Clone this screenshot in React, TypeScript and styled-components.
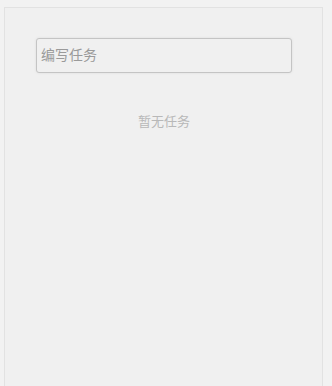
import React from "react";
import styled, { createGlobalStyle } from "styled-components";

const Global = createGlobalStyle`
  html, body { margin: 0; padding: 0; background: #f2f2f2; }
  body { font-family: "Noto Sans CJK SC", "Liberation Sans", sans-serif; overflow: hidden; }
`;

const Panel = styled.div`
  margin: 7px 0 0 4px;
  width: 319px;
  height: 379px;
  box-sizing: border-box;
  border: 1px solid #e2e2e2;
  border-bottom: none;
  background: #f0f0f0;
  display: flex;
  flex-direction: column;
  align-items: flex-start;
  padding: 30px 0 0 31px;
`;

const TaskInput = styled.input`
  width: 256px;
  height: 35px;
  box-sizing: border-box;
  border: 1px solid #c4c4c4;
  border-radius: 3px;
  background: #f0f0f0;
  box-shadow: 0 0 3px rgba(0, 0, 0, 0.08);
  padding: 0 0 3px 4px;
  font-family: "Noto Sans CJK SC", "Liberation Sans", sans-serif;
  font-size: 14px;
  color: #555;
  outline: none;
  &::placeholder { color: #9a9a9a; }
`;

const Empty = styled.div`
  width: 256px;
  margin-top: 39px;
  text-align: center;
  font-size: 13px;
  color: #b8b8b8;
  line-height: 18px;
`;

export default function App() {
  return (
    <>
      <Global />
      <Panel>
        <TaskInput placeholder="编写任务" />
        <Empty>暂无任务</Empty>
      </Panel>
    </>
  );
}
